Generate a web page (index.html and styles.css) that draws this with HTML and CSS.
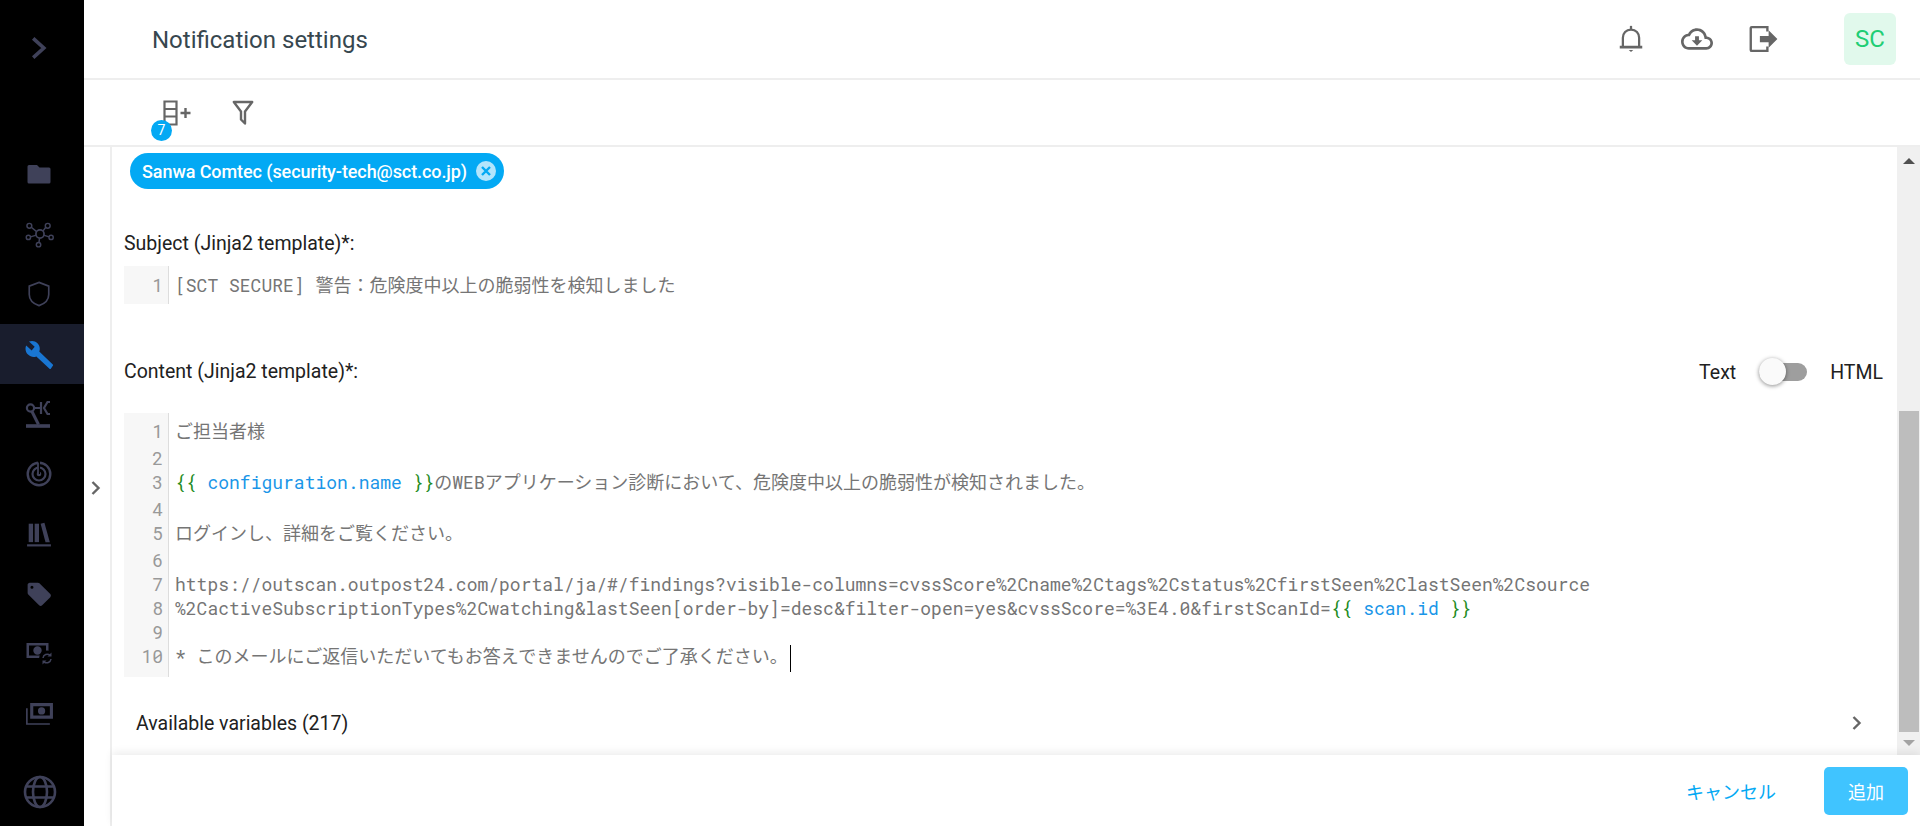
FILE: index.html
```html
<!DOCTYPE html>
<html lang="ja">
<head>
<meta charset="utf-8">
<title>Notification settings</title>
<link rel="stylesheet" href="styles.css">
</head>
<body>
<nav class="sidebar">
  <div class="side-toggle">
    <svg class="ico-chev" viewBox="0 0 16 24"><path d="M3 3l10 9-10 9" fill="none" stroke="#3f4159" stroke-width="3.4"/></svg>
  </div>
  <div class="side-item"><svg class="side-ico" viewBox="0 0 26 24"><path fill="#3f4159" d="M3 3h8l2.500 2.500H23a1.500 1.500 0 0 1 1.500 1.500v13a1.500 1.500 0 0 1-1.500 1.500H3A1.500 1.500 0 0 1 1.500 20V4.500A1.500 1.500 0 0 1 3 3z"/></svg></div>
  <div class="side-item"><svg class="side-ico big" viewBox="0 0 30 26" fill="none" stroke="#3f4159" stroke-width="1.500"><circle cx="15.500" cy="12.500" r="4.200" stroke-width="1.800"/><circle cx="4.500" cy="4" r="2.500"/><circle cx="23.500" cy="4" r="2.500"/><circle cx="3.500" cy="16" r="2.200"/><circle cx="27" cy="16" r="2.200"/><circle cx="14" cy="23.500" r="2.300"/><path d="M6.500 5.500l5.500 4.500M21.500 5.500l-3 4M5.700 15.500l6-1.800M24.800 15.500l-5.500-1.800M14.500 21.200l.5-4.500"/></svg></div>
  <div class="side-item"><svg class="side-ico" viewBox="0 0 24 28"><path fill="none" stroke="#3f4159" stroke-width="1.800" d="M12 1.500l10.500 4v9c0 5.500-4.500 10-10.500 12-6-2-10.500-6.500-10.500-12v-9z"/></svg></div>
  <div class="side-item active"><svg class="side-ico big" viewBox="0 0 24 24"><path fill="#1976d2" d="M23 20.300L11.800 9.500c.9-2.300.4-5-1.500-6.900C8.400.7 5.600.3 3.300 1.300L8 5.500 5.500 8.600 1 4.600C-.2 7 .5 10.100 2.500 12.100c1.900 1.900 4.600 2.400 6.900 1.500L20.500 24c.2.200.5.200.7 0l2-3c.1-.2 0-.5-.2-.7z"/></svg></div>
  <div class="side-item"><svg class="side-ico tall-ico" viewBox="0 0 28 30" fill="none" stroke="#3f4159" stroke-width="2.200"><circle cx="5.500" cy="9" r="3.600"/><path d="M7 12.500L13.500 25.500" stroke-width="3"/><path d="M9.500 9H16M16 3v12M25 3h-2.500L19 9l3.500 6H25"/><path d="M1 27h24" stroke-width="3.600"/></svg></div>
  <div class="side-item"><svg class="side-ico" viewBox="0 0 26 26" fill="none" stroke="#3f4159"><circle cx="13" cy="13" r="11.300" stroke-width="2.400"/><circle cx="13" cy="13" r="6.500" stroke-width="2.200"/><circle cx="13" cy="13" r="2.300" fill="#3f4159" stroke="none"/><path d="M13 13V0" stroke-width="2" stroke="#000"/><path d="M12 13V1.500" stroke-width="1.800"/></svg></div>
  <div class="side-item"><svg class="side-ico" viewBox="0 0 24 24" fill="#3f4159"><rect x="2.500" y="2.500" width="4" height="17"/><rect x="8" y="2.500" width="4" height="17"/><path d="M13.500 2.500l3.500-1 5 18h-4z"/><rect x="1" y="21.500" width="22" height="2"/></svg></div>
  <div class="side-item"><svg class="side-ico" viewBox="0 0 24 24"><path fill="#3f4159" d="M4 1.500h7c.5 0 1 .2 1.400.6l10 10c.8.800.8 2 0 2.800l-7.500 7.500c-.8.800-2 .8-2.800 0l-10-10c-.4-.4-.6-.9-.6-1.400V3.500c0-1.100.9-2 2-2zm1.500 2.800a1.400 1.400 0 1 0 0 2.800 1.400 1.400 0 0 0 0-2.800z"/></svg></div>
  <div class="side-item"><svg class="side-ico big" viewBox="0 0 29 29"><path fill="#3f4159" fill-rule="evenodd" d="M1.500 3h22v15h-22zM4 5.500v10h17v-10zm8.500.8a4.200 4.200 0 1 1 0 8.400 4.200 4.200 0 0 1 0-8.400z"/><circle cx="22" cy="18.500" r="8" fill="#000"/><path fill="none" stroke="#3f4159" stroke-width="1.500" d="M18 18a4.300 4.300 0 0 1 7-2.800M26 19a4.300 4.300 0 0 1-7 2.800"/><path fill="#3f4159" d="M26.500 12.500v4h-4zM17.500 24.500v-4h4z"/></svg></div>
  <div class="side-item"><svg class="side-ico big" viewBox="0 0 28 22"><path fill="#3f4159" fill-rule="evenodd" d="M5 0h22v15H5zm3 3v9h16V3zm8 1a3.500 3.500 0 1 1 0 7 3.500 3.500 0 0 1 0-7z"/><path fill="none" stroke="#3f4159" stroke-width="1.600" d="M1.800 5v15.200H24"/></svg></div>
  <div class="side-globe"><svg class="globe" viewBox="0 0 34 34" fill="none" stroke="#3f4159" stroke-width="2.600"><circle cx="17" cy="17" r="15"/><ellipse cx="17" cy="17" rx="7" ry="15"/><path d="M3 11.500h28M3 22.500h28"/></svg></div>
</nav>

<div class="main">
  <header class="topbar">
    <h1 class="title">Notification settings</h1>
    <div class="top-icons">
      <svg class="top-ico" viewBox="0 0 24 24" fill="none" stroke="#666" stroke-width="1.800"><path d="M5.500 18v-7c0-3.500 2.500-6.500 6.500-6.500s6.500 3 6.500 6.500v7"/><path d="M3 18.500h18" stroke-width="2.200"/><path d="M12 1.500v3"/><path d="M10.200 20.800h3.600l-1.800 1.600z" fill="#666" stroke="none"/></svg>
      <svg class="top-ico cloud" viewBox="0 0 24 24"><path fill="#666" d="M19.350 10.040C18.670 6.590 15.640 4 12 4 9.110 4 6.600 5.640 5.350 8.040 2.340 8.360 0 10.910 0 14c0 3.310 2.690 6 6 6h13c2.760 0 5-2.240 5-5 0-2.640-2.050-4.780-4.650-4.960zM19 18H6c-2.210 0-4-1.790-4-4 0-2.050 1.530-3.760 3.560-3.970l1.070-.11.5-.95C8.080 7.140 9.940 6 12 6c2.620 0 4.880 1.860 5.390 4.430l.3 1.500 1.530.11c1.560.1 2.780 1.410 2.780 2.960 0 1.650-1.350 3-3 3zm-5.550-8h-2.900v3H8l4 4 4-4h-2.550z"/></svg>
      <svg class="top-ico" viewBox="0 0 24 24"><path fill="none" stroke="#666" stroke-width="1.900" d="M15.500 6V2.500H3a.800.800 0 0 0-.8.800v17.400a.800.800 0 0 0 .8.800h12.500V18"/><path fill="#666" d="M9.500 9.500h7V5l7 7-7 7v-4.500h-7z"/></svg>
    </div>
    <div class="avatar">SC</div>
  </header>

  <div class="toolbar">
    <span class="tool tool-cols">
      <svg class="tool-ico cols" viewBox="0 0 28 26"><path fill="none" stroke="#666" stroke-width="2.200" d="M1.500 1.500h12v23h-12zM1.500 9h12M1.500 16.500h12"/><path fill="none" stroke="#666" stroke-width="2.400" d="M17.500 13h10M22.500 8v10"/></svg>
      <span class="badge">7</span>
    </span>
    <svg class="tool-ico filter" viewBox="0 0 22 26"><path fill="none" stroke="#666" stroke-width="2.400" stroke-linejoin="round" d="M1.800 2h18.400l-7.200 9.500V23.500l-4-4v-8z"/></svg>
  </div>

  <div class="body">
    <div class="gutter-col">
      <svg class="ico-side" viewBox="0 0 10 16"><path fill="none" stroke="#666" stroke-width="2.400" d="M1.500 2l6 6-6 6"/></svg>
    </div>
    <div class="pane">
      <div class="panel">
        <div class="scroller">
          <div class="chip-row">
            <span class="chip">Sanwa Comtec (security-tech@sct.co.jp)
              <svg class="chip-x" viewBox="0 0 20 20"><circle cx="10" cy="10" r="10" fill="#b3e5fc"/><path d="M6 6l8 8M14 6l-8 8" stroke="#03a9f4" stroke-width="2.400"/></svg>
            </span>
          </div>

          <label class="label label-subject">Subject (Jinja2 template)*:</label>
          <div class="editor subject">
            <div class="line"><span class="num">1</span><span class="code">[SCT SECURE] 警告：危険度中以上の脆弱性を検知しました</span></div>
          </div>

          <div class="content-head">
            <label class="label">Content (Jinja2 template)*:</label>
            <div class="switch-wrap">
              <span>Text</span>
              <span class="switch"><span class="knob"></span></span>
              <span>HTML</span>
            </div>
          </div>

          <div class="editor content">
            <div class="line tall first"><span class="num">1</span><span class="code">ご担当者様</span></div>
            <div class="line"><span class="num">2</span><span class="code"></span></div>
            <div class="line tall"><span class="num">3</span><span class="code"><span class="g">{{</span> <span class="b">configuration.name</span> <span class="g">}}</span>のWEBアプリケーション診断において、危険度中以上の脆弱性が検知されました。</span></div>
            <div class="line"><span class="num">4</span><span class="code"></span></div>
            <div class="line tall"><span class="num">5</span><span class="code">ログインし、詳細をご覧ください。</span></div>
            <div class="line"><span class="num">6</span><span class="code"></span></div>
            <div class="line"><span class="num">7</span><span class="code">https://outscan.outpost24.com/portal/ja/#/findings?visible-columns=cvssScore%2Cname%2Ctags%2Cstatus%2CfirstSeen%2ClastSeen%2Csource</span></div>
            <div class="line"><span class="num">8</span><span class="code">%2CactiveSubscriptionTypes%2Cwatching&amp;lastSeen[order-by]=desc&amp;filter-open=yes&amp;cvssScore=%3E4.0&amp;firstScanId=<span class="g">{{</span> <span class="b">scan.id</span> <span class="g">}}</span></span></div>
            <div class="line"><span class="num">9</span><span class="code"></span></div>
            <div class="line tall last"><span class="num">10</span><span class="code">* このメールにご返信いただいてもお答えできませんのでご了承ください。<span class="caret"></span></span></div>
          </div>

          <div class="vars">
            <span>Available variables (217)</span>
            <svg class="ico-side" viewBox="0 0 10 16"><path fill="none" stroke="#666" stroke-width="2.400" d="M1.500 2l6 6-6 6"/></svg>
          </div>
        </div>
        <div class="scrollbar">
          <span class="arrow up"></span>
          <span class="track"><span class="thumb"></span></span>
          <span class="arrow down"></span>
        </div>
      </div>
      <footer class="footer">
        <button class="btn-text">キャンセル</button>
        <button class="btn-primary">追加</button>
      </footer>
    </div>
  </div>
</div>
</body>
</html>
```

FILE: styles.css
```css
* { box-sizing: border-box; }
html, body { height: 100%; }
body {
  margin: 0;
  display: flex;
  height: 826px;
  overflow: hidden;
  background: #fff;
  color: #212121;
  font-family: Roboto, "Noto Sans CJK JP", sans-serif;
  font-size: 19.5px;
}

/* sidebar */
.sidebar {
  width: 84px;
  flex: none;
  background: #000;
  display: flex;
  flex-direction: column;
}
.side-toggle {
  height: 144px;
  padding: 35px 0 0 30px;
}
.ico-chev { width: 17px; height: 26px; display: block; }
.side-item {
  height: 60px;
  display: flex;
  align-items: center;
  justify-content: center;
  padding-right: 6px;
  flex: none;
}
.side-item.active { background: #191d2d; }
.side-ico { width: 26px; height: 26px; }
.side-ico.big { width: 29px; height: 29px; }
.side-ico.tall-ico { width: 28px; height: 30px; }
.side-globe {
  margin-top: auto;
  height: 64px;
  padding: 13px 0 0 23px;
}
.globe { width: 34px; height: 34px; display: block; }

/* main */
.main {
  flex: 1;
  min-width: 0;
  display: flex;
  flex-direction: column;
}
.topbar {
  height: 80px;
  flex: none;
  display: flex;
  align-items: center;
  border-bottom: 2px solid #eee;
  padding: 0 24px 0 68px;
}
.title {
  margin: 0;
  padding-top: 2px;
  flex: 1;
  font-size: 24px;
  font-weight: 400;
  color: #37474f;
}
.top-icons { display: flex; align-items: center; gap: 35px; margin-right: 66px; }
.top-ico { width: 30px; height: 30px; display: block; }
.top-ico.cloud { width: 32px; height: 32px; }
.avatar {
  width: 52px;
  height: 52px;
  border-radius: 6px;
  background: #e1f9ec;
  color: #20ce74;
  font-size: 24px;
  display: flex;
  align-items: center;
  justify-content: center;
}

.toolbar {
  height: 67px;
  flex: none;
  display: flex;
  align-items: center;
  gap: 41px;
  border-bottom: 2px solid #eee;
  padding: 0 0 0 79px;
}
.tool { position: relative; display: block; }
.tool-ico { display: block; }
.tool-ico.cols { width: 28px; height: 26px; }
.tool-ico.filter { width: 22px; height: 26px; }
.badge {
  position: absolute;
  left: -12px;
  top: 20px;
  width: 21px;
  height: 21px;
  border-radius: 50%;
  background: #03a9f4;
  color: #fff;
  font-size: 14px;
  line-height: 21px;
  text-align: center;
}

.body { flex: 1; min-height: 0; display: flex; }
.gutter-col {
  width: 28px;
  flex: none;
  border-right: 2px solid #eee;
  padding: 333px 0 0 7px;
}
.ico-side { width: 10px; height: 16px; display: block; }

.pane { flex: 1; min-width: 0; display: flex; flex-direction: column; }
.panel { flex: 1; min-height: 0; display: flex; }
.scroller { flex: 1; min-width: 0; padding: 0 0 0 12px; overflow: hidden; }

.chip-row { padding: 6px 0 0 6px; height: 85px; }
.chip {
  display: inline-flex;
  align-items: center;
  height: 36px;
  padding: 0 8px 0 12px;
  border-radius: 18px;
  background: #03a9f4;
  color: #fff;
  font-size: 18px;
  font-weight: 500;
  letter-spacing: -0.08px;
  gap: 9px;
}
.chip-x { width: 20px; height: 20px; flex: none; }
.label { display: block; color: #212121; font-size: 19.5px; line-height: 24px; }
.label-subject { padding-bottom: 10px; }

.editor {
  font-family: "Roboto Mono", "Liberation Mono", "Noto Sans CJK JP", monospace;
  font-size: 18px;
  color: #757575;
}
.line { display: flex; height: 24px; line-height: 24px; }
.line.tall { height: 27px; }
.subject .line { height: 38px; line-height: 38px; }
.num {
  width: 45px;
  flex: none;
  background: #f7f7f7;
  border-right: 1px solid #ddd;
  color: #999;
  text-align: right;
  padding-right: 5px;
}
.code { padding-left: 6px; white-space: pre; }
.g { color: #228b22; }
.b { color: #1a96e8; }
.caret {
  display: inline-block;
  width: 1px;
  height: 27px;
  margin-left: 2px;
  background: #000;
  vertical-align: middle;
}
.line.first .num { padding-top: 6px; height: 33px; }
.line.first { height: 33px; padding-top: 0; }
.line.first .code { padding-top: 6px; }
.line.last .num { height: 33px; }
.line.last { height: 33px; }

.content-head {
  display: flex;
  align-items: center;
  justify-content: space-between;
  margin-top: 46px;
  height: 44px;
  margin-bottom: 19px;
  padding-right: 14px;
}
.switch-wrap { display: flex; align-items: center; gap: 23px; color: #212121; }
.switch {
  position: relative;
  display: block;
  width: 48px;
  height: 18px;
  border-radius: 9px;
  background: #9e9e9e;
}
.knob {
  position: absolute;
  left: 0;
  top: -5px;
  width: 27px;
  height: 27px;
  border-radius: 50%;
  background: #fafafa;
  box-shadow: 0 1px 4px rgba(0,0,0,.45);
}
.vars {
  display: flex;
  align-items: center;
  justify-content: space-between;
  height: 46px;
  margin-top: 23px;
  padding: 0 35px 0 12px;
  color: #212121;
}

/* scrollbar */
.scrollbar {
  width: 23px;
  flex: none;
  background: #f0f0f0;
  display: flex;
  flex-direction: column;
  align-items: center;
}
.arrow { flex: none; width: 0; height: 0; border-left: 6px solid transparent; border-right: 6px solid transparent; }
.arrow.up { margin-top: 11px; border-bottom: 6px solid #505050; }
.arrow.down { margin: 8px 0 9px; border-top: 6px solid #a3a3a3; }
.track { flex: 1; width: 100%; display: flex; flex-direction: column; justify-content: flex-end; padding: 0 1px 0 2px; }
.thumb { display: block; height: 321px; background: #bdbdbd; }

.footer {
  height: 71px;
  flex: none;
  display: flex;
  align-items: center;
  justify-content: flex-end;
  gap: 48px;
  padding: 0 12px 0 0;
  background: #fff;
  box-shadow: 0 -3px 8px rgba(0,0,0,.07);
  position: relative;
}
.btn-text, .btn-primary {
  border: 0;
  padding: 0;
  font-family: Roboto, "Noto Sans CJK JP", sans-serif;
  font-size: 18px;
  cursor: pointer;
}
.btn-text { background: none; color: #03a9f4; }
.btn-primary {
  width: 84px;
  height: 48px;
  border-radius: 5px;
  background: #40c4ff;
  color: #fff;
}
```
